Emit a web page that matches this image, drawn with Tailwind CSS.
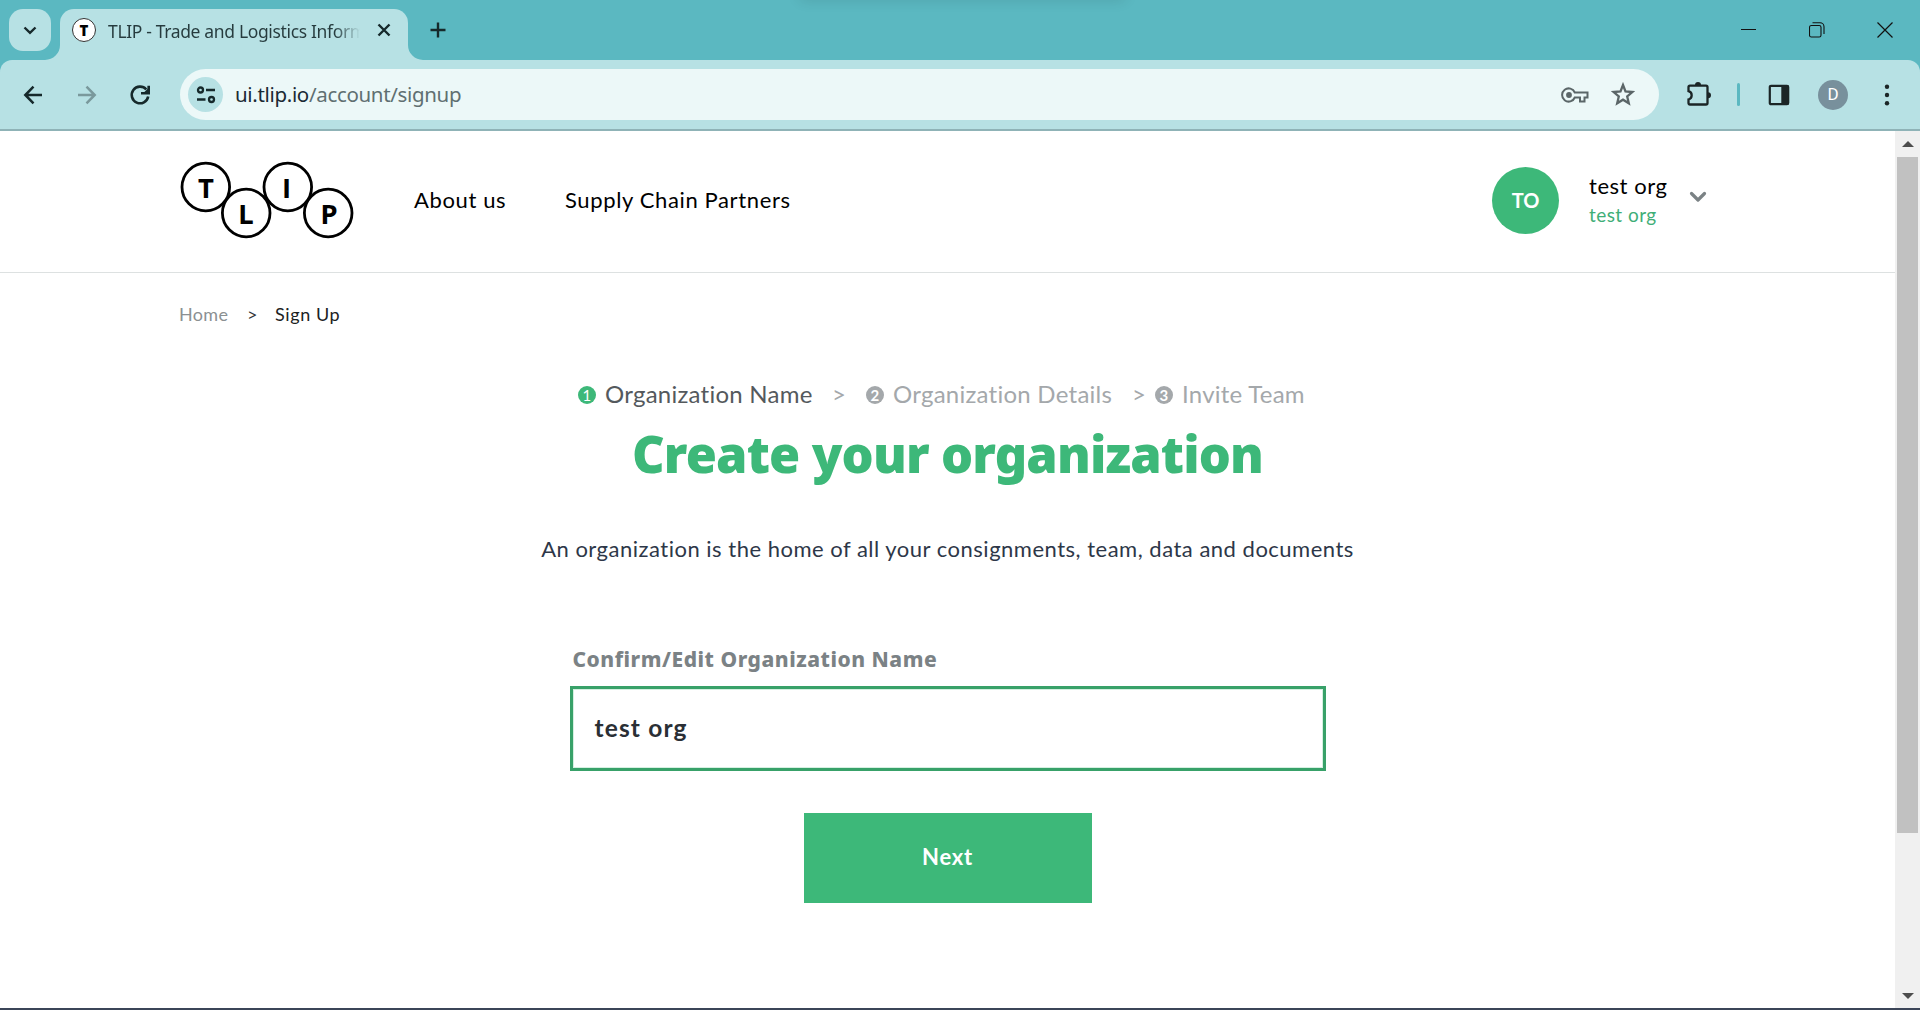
<!DOCTYPE html>
<html lang="en">
<head>
<meta charset="utf-8">
<title>TLIP - Trade and Logistics Information Pipeline</title>
<script src="https://cdn.jsdelivr.net/npm/@tailwindcss/browser@4"></script>
</head>
<body class="w-[1920px] h-[1010px] overflow-hidden flex flex-col bg-white font-['Lato',sans-serif]">

<!-- Browser tab strip -->
<div class="relative h-[60px] shrink-0 flex bg-[#5bb8c1] pl-[9px] font-['Noto_Sans',sans-serif]">
  <div class="absolute left-[800px] top-[-12px] w-[325px] h-[12px] shadow-[0_0_14px_rgba(0,0,0,0.12)]"></div>
  <div class="mt-[9px] size-[42px] rounded-[14px] bg-[#b7e1e4] flex items-center justify-center">
    <svg class="size-[14px]" viewBox="0 0 14 14" fill="none" stroke="#16292b" stroke-width="2.4"><path d="M1.5 4.5 7 9.8l5.500-5.300"/></svg>
  </div>
  <svg class="self-end w-[15px] h-[15px] -ml-[6px]" viewBox="0 0 15 15"><path d="M15 0V15H0A15 15 0 0 0 15 0Z" fill="#b7e1e4"/></svg>
  <div class="mt-[9px] w-[348px] h-[51px] rounded-t-[14px] bg-[#b7e1e4] flex items-center pl-[12px] pb-[9px]">
    <div class="size-[24px] shrink-0 rounded-full border border-[#333] bg-white flex items-center justify-center text-[15px] leading-none text-black"><span class="font-['Open_Sans',sans-serif] font-extrabold">T</span></div>
    <div class="ml-[12px] w-[252px] overflow-hidden whitespace-nowrap text-[17.5px] leading-[26px] pt-[2px] tracking-[-0.35px] text-[#16292b]/90 mask-r-from-90% mask-r-to-100%">TLIP - Trade and Logistics Inform</div>
    <svg class="ml-[16px] size-[16px]" viewBox="0 0 16 16" stroke="#16292b" stroke-width="2.400"><path d="M2.500 2.500l11 11M13.500 2.500l-11 11"/></svg>
  </div>
  <svg class="self-end w-[15px] h-[15px]" viewBox="0 0 15 15"><path d="M0 0V15H15A15 15 0 0 1 0 0Z" fill="#b7e1e4"/></svg>
  <svg class="ml-[7px] mt-[22px] size-[16px]" viewBox="0 0 16 16" stroke="#16292b" stroke-width="2.400"><path d="M8 0.500v15M0.500 8h15"/></svg>
  <div class="ml-auto mt-[22px] mr-[27px] flex gap-[52px]">
    <svg class="size-[16px]" viewBox="0 0 16 16" stroke="#111" stroke-width="1"><path d="M0 7.500h15"/></svg>
    <svg class="size-[16px]" viewBox="0 0 16 16" fill="none" stroke="#111" stroke-width="1.100"><rect x=".5" y="3.500" width="11.500" height="11.500" rx="1.800"/><path d="M3.500.8h7.500a4 4 0 0 1 4 4v7.200"/></svg>
    <svg class="size-[16px]" viewBox="0 0 16 16" stroke="#111" stroke-width="1.200"><path d="M.5.500l15 15M15.500.500l-15 15"/></svg>
  </div>
</div>

<!-- Toolbar -->
<div class="h-[71px] shrink-0 bg-[#5bb8c1]">
  <div class="h-[71px] rounded-t-[12px] bg-[#b7e1e4] border-b-2 border-[#8fb3b7] flex items-center pl-[21px] pr-[20px] font-['Noto_Sans',sans-serif]">
    <svg class="size-[24px]" viewBox="0 0 24 24" fill="none" stroke="#16292b" stroke-width="2.500"><path d="M21 12H4.500M12.500 3.700 4.300 12l8.200 8.300"/></svg>
    <svg class="ml-[30px] size-[24px]" viewBox="0 0 24 24" fill="none" stroke="#7a999c" stroke-width="2.500"><path d="M3 12h16.500M11.500 3.700 19.700 12l-8.200 8.300"/></svg>
    <svg class="ml-[29px] size-[24px]" viewBox="0 0 24 24" fill="none" stroke="#16292b" stroke-width="2.600"><path d="M20.200 13.500A8.300 8.300 0 1 1 18.300 6.500"/><path d="M20.700 2.700v7.600h-7.700"/><path d="M20.700 5v5.300h-5.700z" fill="#16292b" stroke="none"/></svg>
    <div class="ml-[28px] w-[1479px] h-[51px] rounded-full bg-[#ecf8f8] flex items-center pl-[8px] pr-[24px]">
      <div class="size-[35px] rounded-full bg-[#b7e1e4] flex items-center justify-center">
        <svg class="size-[20px]" viewBox="0 0 20 20" fill="none" stroke="#16292b" stroke-width="2.300"><circle cx="4.500" cy="5" r="2.500"/><path d="M10 5h9M1 14.500h8.500"/><circle cx="15.500" cy="14.500" r="2.500"/></svg>
      </div>
      <div class="ml-[12px] -mt-[2px] text-[20.500px] leading-[30px] tracking-[-0.330px] text-[#5f6f71]"><span class="text-[#1a2a35]">ui.tlip.io</span>/account/signup</div>
      <svg class="ml-auto w-[28px] h-[16px]" viewBox="0 0 28 16" fill="none" stroke="#5b6668" stroke-width="2"><path d="M13.800 5.500H26.500v5h-3v4h-4.500v-4h-5.200A6.600 6.600 0 1 1 13.800 5.500Z"/><circle cx="8" cy="8" r="2.900" fill="#5b6668" stroke="none"/></svg>
      <svg class="ml-[22px] -mt-[1px] size-[24px]" viewBox="0 0 24 24" fill="none" stroke="#5b6668" stroke-width="2.300"><path d="M12 3l2.500 6.400 6.800.6-5.100 4.500 1.600 6.800L12 17.700l-5.800 3.600 1.600-6.800-5.100-4.500 6.800-.6z"/></svg>
    </div>
    <svg class="ml-[27px] -mt-[2px] w-[26px] h-[26px]" viewBox="0 0 26 26"><path d="M2.500 6.200Q2.500 4.700 4 4.700H20Q21.500 4.700 21.500 6.200V22Q21.500 23.500 20 23.500H4Q2.500 23.500 2.500 22V18.500A4.300 4.300 0 0 0 2.500 10.200Z" fill="none" stroke="#1b2526" stroke-width="2.300"/><path d="M9 4a3 3 0 0 1 6 0zM22 11.200a3 3 0 0 1 0 6z" fill="#1b2526"/></svg>
    <div class="ml-[25px] w-[3px] h-[23px] rounded-full bg-[#5bb8c1]"></div>
    <svg class="ml-[28px] w-[22px] h-[22px]" viewBox="0 0 22 22"><rect x="1.800" y="1.800" width="18.400" height="18.400" rx="1.200" fill="none" stroke="#1b2526" stroke-width="2.200"/><path d="M13.300 1h7v20h-7z" fill="#1b2526"/></svg>
    <div class="ml-[28px] size-[30px] rounded-full bg-[#78909c] text-white text-[17px] leading-none font-['Roboto',sans-serif] flex items-center justify-center">D</div>
    <svg class="ml-auto w-[26px] h-[24px]" viewBox="0 0 26 24" fill="#1b2526"><circle cx="13" cy="3.700" r="2.200"/><circle cx="13" cy="12" r="2.200"/><circle cx="13" cy="20.300" r="2.200"/></svg>
  </div>
</div>

<!-- Page viewport -->
<div class="h-[877px] flex">
  <div class="w-[1895px]">
    <header class="h-[142px] border-b border-[#dde1e1] flex pl-[180px]">
      <svg class="mt-[30px] w-[175px] h-[78px]" viewBox="180 161 175 78" fill="none" stroke="#000" stroke-width="2.800">
        <circle cx="205.800" cy="187" r="23.800"/><circle cx="246.200" cy="213" r="23.800"/><circle cx="287.800" cy="187" r="23.800"/><circle cx="328.200" cy="213" r="23.800"/>
        <g fill="#000" stroke="none" font-family="Noto Sans, sans-serif" font-weight="700" font-size="27.500" text-anchor="middle"><text x="206" y="198">T</text><text x="246" y="224">L</text><text x="286.500" y="198" font-family="Open Sans, sans-serif">I</text><text x="329" y="224">P</text></g>
      </svg>
      <nav class="ml-[59px] mt-[54px] flex text-[22px] leading-[30px] text-black tracking-[0.630px]">
        <a class="w-[151px]">About us</a><a>Supply Chain Partners</a>
      </nav>
      <div class="ml-auto w-[403px] flex">
        <div class="mt-[36px] pb-[2px] size-[67px] rounded-full bg-[#3db879] text-white text-[20px] font-bold flex items-center justify-center">TO</div>
        <div class="ml-[30px] mt-[40px]">
          <div class="text-[22px] leading-[30px] tracking-[0.550px] text-black">test org</div>
          <div class="text-[19px] leading-[28px] tracking-[0.450px] text-[#3fae77]">test org</div>
        </div>
        <svg class="ml-[21px] mt-[60px] w-[18px] h-[12px]" viewBox="0 0 18 12" fill="none" stroke="#7b8285" stroke-width="3.200" stroke-linecap="round" stroke-linejoin="round"><path d="M2.500 2.500 9 9l6.500-6.500"/></svg>
      </div>
    </header>

    <div class="pl-[179px] pt-[29px] flex text-[18px] leading-[24px]">
      <span class="w-[68px] tracking-[0.300px] text-[#8b9092]">Home</span><span class="w-[28px] text-[#33383a]">&gt;</span><span class="tracking-[0.600px] text-[#1c2223]">Sign Up</span>
    </div>

    <main class="flex flex-col items-center">
      <div class="self-start mt-[53px] pl-[578px] flex items-center text-[24px] leading-[30px] tracking-[0.250px] text-[#a4a8ab]">
        <span class="size-[18px] mt-[2px] rounded-full bg-[#3db879] text-white text-[15px] leading-none flex items-center justify-center">1</span>
        <span class="ml-[9px] w-[227px] text-[#54595d]">Organization Name</span>
        <span class="w-[34px]">&gt;</span>
        <span class="size-[18px] mt-[2px] rounded-full bg-[#a4a8ab] text-white text-[15px] leading-none font-bold flex items-center justify-center">2</span>
        <span class="ml-[9px] w-[239px]">Organization Details</span>
        <span class="w-[23px]">&gt;</span>
        <span class="size-[18px] mt-[2px] rounded-full bg-[#a4a8ab] text-white text-[15px] leading-none font-bold flex items-center justify-center">3</span>
        <span class="ml-[9px]">Invite Team</span>
      </div>
      <h1 class="mt-[13px] text-[50.500px] leading-[64px] tracking-[-0.850px] font-black font-['Noto_Sans',sans-serif] text-[#3db879]">Create your organization</h1>
      <p class="mt-[47px] text-[22px] leading-[32px] tracking-[0.500px] text-[#2d3748]">An organization is the home of all your consignments, team, data and documents</p>
      <form class="mt-[80px] w-[756px] flex flex-col items-center">
        <label class="self-start pl-[3px] text-[21px] leading-[28px] tracking-[0.520px] font-extrabold font-['Noto_Sans',sans-serif] text-[#7b8285]">Confirm/Edit Organization Name</label>
        <div class="mt-[13px] w-[756px] h-[85px] border-[3px] border-[#38a169] flex items-center pl-[22px] pb-[1px] text-[24.500px] tracking-[1.150px] font-bold text-[#2a2f35] shadow-[inset_0_0_0_1px_#d5f0e1]">test org</div>
        <div class="mt-[42px] w-[288px] h-[90px] pb-[3px] bg-[#3db879] text-white text-[22px] tracking-[0.800px] font-bold flex items-center justify-center">Next</div>
      </form>
    </main>
  </div>

  <!-- Scrollbar -->
  <div class="w-[25px] bg-[#f0f0f0] flex flex-col items-center">
    <svg class="mt-[10px] w-[12px] h-[6px]" viewBox="0 0 12 6" fill="#4d4d4d"><path d="M0 6 6 0l6 6z"/></svg>
    <div class="mt-[10px] w-[21px] h-[676px] bg-[#c1c1c1]"></div>
    <svg class="mt-[160px] w-[12px] h-[6px]" viewBox="0 0 12 6" fill="#4d4d4d"><path d="M0 0h12L6 6z"/></svg>
  </div>
</div>
<div class="h-[2px] bg-[#3b4558]"></div>
</body>
</html>
